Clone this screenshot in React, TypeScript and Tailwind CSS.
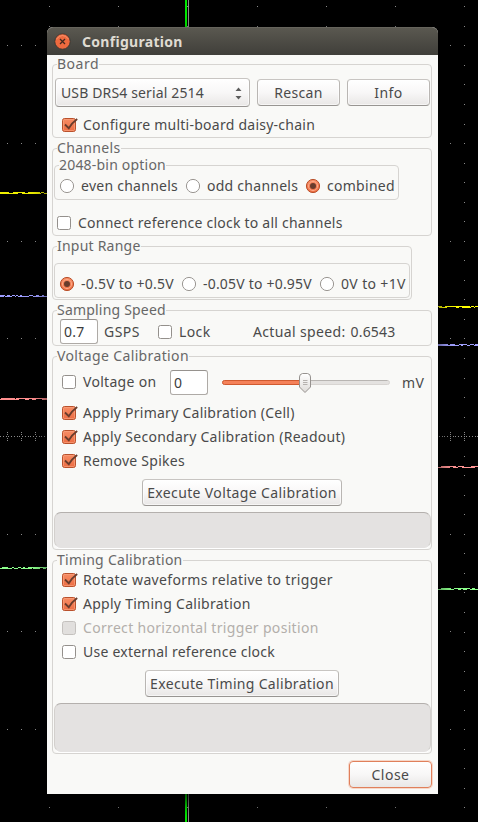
import type { ReactNode } from "react";

const COLUMNS = [49, 118, 187, 257, 326, 395, 464];
const MINOR_X = [7, 21, 35, 450];
const ROWS = Array.from({ length: 42 }, (_, k) => Math.round(6.3 + k * 19.54));
const MAJOR_ROWS = [45, 143, 241, 338, 534, 631, 729];

// Deterministic noise so that the traces look the same on every render
function noise(seed: number) {
  let s = seed;
  return () => {
    s = (s * 1103515245 + 12345) % 2147483648;
    return s / 2147483648;
  };
}

function Trace({ x, end, y, color, seed }: { x: number; end: number; y: number; color: string; seed: number }) {
  const rand = noise(seed);
  let d = "";
  let cx = x;
  while (cx < end) {
    const len = Math.min(1 + Math.floor(rand() * 4), end - cx);
    const r = rand();
    if (r < 0.7) d += `M${cx} ${y - 1}h${len}v1h-${len}z`;
    if (r > 0.25) d += `M${cx} ${y}h${len}v1h-${len}z`;
    cx += len;
  }
  return <path d={d} fill={color} />;
}

function Scope() {
  return (
    <svg width="478" height="822" shapeRendering="crispEdges" className="block bg-black">
      <g fill="#8a8a8a">
        {COLUMNS.map((x) => ROWS.map((y) => <rect key={`${x}-${y}`} x={x} y={y} width="1" height="1" />))}
        {MINOR_X.map((x) => MAJOR_ROWS.map((y) => <rect key={`${x}-${y}`} x={x} y={y} width="1" height="1" />))}
        {Array.from({ length: 174 }, (_, i) => (
          <rect key={i} x={Math.round(i * 2.76)} y="436" width="1" height="1" />
        ))}
        {[7, 21, 35, 450, 464].map((x) =>
          [432, 434, 438, 440].map((y) => <rect key={`${x}-${y}`} x={x} y={y} width="1" height="1" />),
        )}
      </g>
      <rect x="185" width="2" height="822" fill="#00e800" />
      <rect x="188" width="1" height="822" fill="#8a8a8a" />
      <Trace x={0} end={47} y={193} color="#f0f000" seed={11} />
      <Trace x={0} end={47} y={296} color="#9c9cff" seed={23} />
      <Trace x={0} end={47} y={399} color="#ff8e8e" seed={37} />
      <Trace x={0} end={47} y={568} color="#8cff8c" seed={41} />
      <Trace x={438} end={478} y={307} color="#ffff00" seed={53} />
      <Trace x={438} end={478} y={345} color="#a0a0ff" seed={67} />
      <Trace x={438} end={478} y={467} color="#ff9494" seed={79} />
      <Trace x={438} end={478} y={589} color="#8cff8c" seed={83} />
    </svg>
  );
}

function Group({ title, tracking = "", className, children }: { title?: string; tracking?: string; className: string; children: ReactNode }) {
  return (
    <div className={`relative flex shrink-0 flex-col items-start rounded-[4px] border border-[#d6d4d1] ${className}`}>
      {title && (
        <span className={`absolute -top-[9px] left-[4px] bg-[#f9f9f7] leading-[16px] text-[#676767] ${tracking}`}>{title}</span>
      )}
      {children}
    </div>
  );
}

function Check({ label, tracking, checked, disabled, className = "" }: { label: string; tracking: string; checked?: boolean; disabled?: boolean; className?: string }) {
  return (
    <div className={`flex shrink-0 items-center gap-[7px] ${className}`}>
      <svg width="14" height="14" viewBox="0 0 14 14" className="shrink-0 overflow-visible">
        {checked ? (
          <>
            <rect x="0.5" y="0.5" width="13" height="13" rx="2" fill="url(#orange)" stroke="#b9512c" />
            <rect x="1.5" y="1.5" width="11" height="11" rx="1" fill="none" stroke="#f9a17d" strokeOpacity="0.7" />
            <path d="M3 6.5L6.8 10.2Q10 4.8 15.2 1" fill="none" stroke="#693c2c" strokeWidth="1.8" />
          </>
        ) : (
          <rect x="0.5" y="0.5" width="13" height="13" rx="2" fill={disabled ? "#e1dfdd" : "#ffffff"} stroke={disabled ? "#c4c1be" : "#94908c"} />
        )}
      </svg>
      <span className={`${tracking} ${disabled ? "text-[#b3afab]" : ""}`}>{label}</span>
    </div>
  );
}

function Radio({ label, tracking, checked, className = "" }: { label: string; tracking: string; checked?: boolean; className?: string }) {
  return (
    <div className={`flex shrink-0 items-center gap-[7px] ${className}`}>
      <svg width="14" height="14" viewBox="0 0 14 14" className="shrink-0 overflow-visible">
        {checked ? (
          <>
            <circle cx="7" cy="7" r="6.6" fill="url(#orange)" stroke="#b9512c" />
            <circle cx="7" cy="7" r="4.6" fill="none" stroke="#fba987" />
            <circle cx="7" cy="7" r="3" fill="#693c2c" />
          </>
        ) : (
          <circle cx="7" cy="7" r="6.6" fill="#ffffff" stroke="#9b9793" />
        )}
      </svg>
      <span className={tracking}>{label}</span>
    </div>
  );
}

function Button({ className, children }: { className: string; children: ReactNode }) {
  return (
    <button
      className={`flex shrink-0 items-center justify-center rounded-[4px] border bg-linear-to-b from-white via-[#f8f7f7] to-[#e9e7e6] ${className}`}
    >
      {children}
    </button>
  );
}

const EDGE = "border-[#b9b6b3] border-b-[#989592] border-t-[#c8c5c2] shadow-[inset_0_0_0_1px_rgba(255,255,255,0.6)]";

function Entry({ value, className = "" }: { value: string; className?: string }) {
  return (
    <div className={`flex h-[25px] w-[38px] shrink-0 items-center rounded-[3px] border border-[#aeaaa6] border-t-[#96928e] bg-white pl-[3px] tracking-[0.2px] text-[#3c3c3c] ${className}`}>
      {value}
    </div>
  );
}

function Progress({ className }: { className: string }) {
  return (
    <div className={`ml-px w-[377px] shrink-0 rounded-[7px] border border-[#d3d0cd] border-b-[#e4e2e1] border-t-[#b4b0ad] bg-[#e4e2e1] shadow-[0_1px_0_#ffffff] ${className}`} />
  );
}

function Slider() {
  return (
    <svg width="168" height="21" viewBox="0 0 168 21" className="ml-[14px] mt-[2px] shrink-0 overflow-visible">
      <rect x="0.5" y="7.5" width="167" height="4" rx="2" fill="#e4e2e0" stroke="#d8d5d2" />
      <path d="M78 7.5H165.5" stroke="#b8b5b2" />
      <rect x="0.5" y="7.5" width="84" height="4" rx="2" fill="#f58159" stroke="#d05a30" />
      <path d="M80.5 0.5H85.5Q88.5 1 88.5 4V14L83 19.5L77.5 14V4Q77.5 1 80.5 0.5Z" fill="url(#knob)" stroke="#96928f" />
      <path d="M81 7.5H85.5M81 9.5H85.5M81 11.5H85.5" stroke="#b5b1ae" />
    </svg>
  );
}

export default function App() {
  return (
    <main className="relative h-[824px] w-[478px] overflow-hidden bg-white">
      <svg width="0" height="0" className="absolute">
        <defs>
          <linearGradient id="orange" x1="0" y1="0" x2="0" y2="1">
            <stop offset="0" stopColor="#f78e66" />
            <stop offset="1" stopColor="#ec6c42" />
          </linearGradient>
          <linearGradient id="knob" x1="0" y1="0" x2="0" y2="1">
            <stop offset="0" stopColor="#ffffff" />
            <stop offset="1" stopColor="#dedbd8" />
          </linearGradient>
        </defs>
      </svg>
      <div className="h-[822px] overflow-hidden">
        <Scope />
        <div className="absolute left-[47px] top-[27px] flex h-[767px] w-[391px] flex-col whitespace-nowrap rounded-t-[6px] bg-[#f9f9f7] font-['Noto_Sans','Open_Sans',sans-serif] text-[14px] leading-[18px] text-[#4a4a4a] shadow-[0_8px_18px_rgba(0,0,0,0.75)]">
          <header className="flex h-[28px] shrink-0 items-center rounded-t-[6px] border-t border-[#66645c] bg-linear-to-b from-[#5a5850] to-[#403f3a] pl-[7px]">
            <svg width="17" height="17" viewBox="0 0 17 17" className="shrink-0">
              <circle cx="8.5" cy="8.5" r="7.7" fill="#ee6a3f" stroke="#33322e" strokeWidth="0.8" />
              <path d="M2.5 6Q8.5 -1 14.5 6" fill="none" stroke="#f79a78" strokeWidth="0.8" />
              <path d="M6 6L11 11M11 6L6 11" stroke="#43281e" strokeWidth="1.3" />
            </svg>
            <h1 className="ml-[11px] text-[14px] font-bold leading-[18px] tracking-[0.3px] text-[#dfdbd2]">Configuration</h1>
          </header>

          <div className="flex flex-col gap-[10px] pl-[5px] pt-[9px]">
            <Group title="Board" tracking="tracking-[0.5px]" className="h-[74px] w-[380px] pl-[2px] pt-[13px]">
              <div className="flex items-center gap-[7px]">
                <Button className={`h-[29px] w-[195px] justify-between pl-[5px] pr-[7px] ${EDGE}`}>
                  <span className="grow text-left tracking-[0.14px]">USB DRS4 serial 2514</span>
                  <svg width="7" height="13" viewBox="0 0 7 13" className="relative top-px">
                    <path d="M0.5 4L3.5 0.5L6.5 4ZM0.5 9L3.5 12.5L6.5 9Z" fill="#5c5c5c" />
                  </svg>
                </Button>
                <Button className={`h-[27px] w-[83px] tracking-[0.3px] ${EDGE}`}>Rescan</Button>
                <Button className={`h-[27px] w-[83px] tracking-[0.5px] ${EDGE}`}>Info</Button>
              </div>
              <Check checked label="Configure multi-board daisy-chain" tracking="tracking-[0.25px]" className="ml-[7px] mt-[9px]" />
            </Group>

            <Group title="Channels" tracking="tracking-[0.33px]" className="h-[88px] w-[380px] pl-px pt-[16px]">
              <Group title="2048-bin option" tracking="tracking-[0.2px]" className="h-[35px] w-[345px] pl-[5px] pt-[11px]">
                <div className="flex">
                  <Radio label="even channels" tracking="tracking-[0.26px]" className="w-[126px]" />
                  <Radio label="odd channels" tracking="tracking-[0.26px]" className="w-[120px]" />
                  <Radio checked label="combined" tracking="tracking-[0.28px]" />
                </div>
              </Group>
              <Check label="Connect reference clock to all channels" tracking="tracking-[0.23px]" className="ml-[3px] mt-[14px]" />
            </Group>

            <Group title="Input Range" tracking="tracking-[0.22px]" className="h-[54px] w-[360px] pl-px pt-[16px]">
              <Group className="h-[35px] w-[356px] pl-[5px] pt-[11px]">
                <div className="flex">
                  <Radio checked label="-0.5V to +0.5V" tracking="tracking-[0.23px]" className="w-[122px]" />
                  <Radio label="-0.05V to +0.95V" tracking="tracking-[0.2px]" className="w-[138px]" />
                  <Radio label="0V to +1V" tracking="tracking-[0.36px]" />
                </div>
              </Group>
            </Group>

            <Group title="Sampling Speed" tracking="tracking-[0.2px]" className="h-[36px] w-[380px] pl-[7px] pt-[8px]">
              <div className="flex items-center">
                <Entry value="0.7" />
                <span className="ml-[6px] w-[54px] tracking-[0.45px]">GSPS</span>
                <Check label="Lock" tracking="tracking-[0.4px]" className="w-[95px]" />
                <span className="w-[97.5px] tracking-[0.35px]">Actual speed:</span>
                <span className="tracking-[0.2px]">0.6543</span>
              </div>
            </Group>

            <Group title="Voltage Calibration" tracking="tracking-[0.37px]" className="h-[194px] w-[380px] pt-[13px]">
              <div className="flex items-center pl-[9px]">
                <Check label="Voltage on" tracking="tracking-[0.3px]" className="mb-px w-[108px]" />
                <Entry value="0" />
                <Slider />
                <span className="ml-[12px] tracking-[0.5px]">mV</span>
              </div>
              <div className="mt-[6px] pl-[9px]">
                <Check checked label="Apply Primary Calibration (Cell)" tracking="tracking-[0.25px]" className="h-6" />
                <Check checked label="Apply Secondary Calibration (Readout)" tracking="tracking-[0.28px]" className="h-6" />
                <Check checked label="Remove Spikes" tracking="tracking-[0.26px]" className="h-6" />
              </div>
              <Button className={`ml-[89px] mt-[6px] h-[27px] w-[200px] tracking-[0.37px] ${EDGE}`}>Execute Voltage Calibration</Button>
              <Progress className="mt-[6px] h-[36px]" />
            </Group>

            <Group title="Timing Calibration" tracking="tracking-[0.27px]" className="h-[194px] w-[380px] pt-[7px]">
              <div className="pl-[9px]">
                <Check checked label="Rotate waveforms relative to trigger" tracking="tracking-[0.34px]" className="h-6" />
                <Check checked label="Apply Timing Calibration" tracking="tracking-[0.27px]" className="h-6" />
                <Check disabled label="Correct horizontal trigger position" tracking="tracking-[0.32px]" className="h-6" />
                <Check label="Use external reference clock" tracking="tracking-[0.23px]" className="h-6" />
              </div>
              <Button className={`ml-[92px] mt-[6px] h-[27px] w-[194px] tracking-[0.32px] ${EDGE}`}>Execute Timing Calibration</Button>
              <Progress className="mt-[6px] h-[49px]" />
            </Group>
          </div>

          <footer className="flex justify-end pr-[6px] pt-[7px]">
            <Button className="h-[27px] w-[83px] border-[#e0805b] tracking-[0.5px] ring-1 ring-[#f3b59c]/50">Close</Button>
          </footer>
        </div>
      </div>
    </main>
  );
}
